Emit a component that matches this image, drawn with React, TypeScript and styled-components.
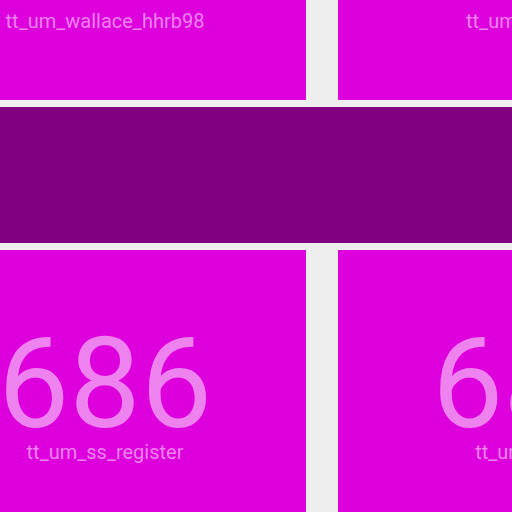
import React from "react";
import styled, { createGlobalStyle } from "styled-components";

const Global = createGlobalStyle`
  html, body { margin: 0; padding: 0; background: #eeeeee; overflow: hidden; }
  body { font-family: Roboto, "Liberation Sans", sans-serif; }
`;

const Page = styled.div`
  width: 836px;
  margin-left: -96px;
  display: flex;
  flex-direction: column;
  gap: 7px;
`;

const Row = styled.div`
  display: grid;
  grid-template-columns: 402px 402px;
  gap: 32px;
`;

const Tile = styled.div<{ $h: number }>`
  height: ${(p) => p.$h}px;
  background: #dd00dd;
  color: #ee82ee;
  display: flex;
  flex-direction: column;
  align-items: center;
  overflow: hidden;
`;

const Name = styled.div<{ $top: number }>`
  font-size: 20px;
  line-height: 23px;
  margin-top: ${(p) => p.$top}px;
  white-space: nowrap;
`;

const Count = styled.div`
  font-size: 127px;
  line-height: 127px;
  margin-top: 70px;
`;

const Band = styled.div`
  height: 136px;
  background: #800080;
  width: 100%;
`;

export default function App() {
  return (
    <>
      <Global />
      <Page>
        <Row>
          <Tile $h={100}>
            <Name $top={10}>tt_um_wallace_hhrb98</Name>
          </Tile>
          <Tile $h={100}>
            <Name $top={10}>tt_um_tiny_ringo</Name>
          </Tile>
        </Row>
        <Band />
        <Row>
          <Tile $h={300}>
            <Count>686</Count>
            <Name $top={-6}>tt_um_ss_register</Name>
          </Tile>
          <Tile $h={300}>
            <Count>686</Count>
            <Name $top={-6}>tt_um_counter</Name>
          </Tile>
        </Row>
      </Page>
    </>
  );
}
